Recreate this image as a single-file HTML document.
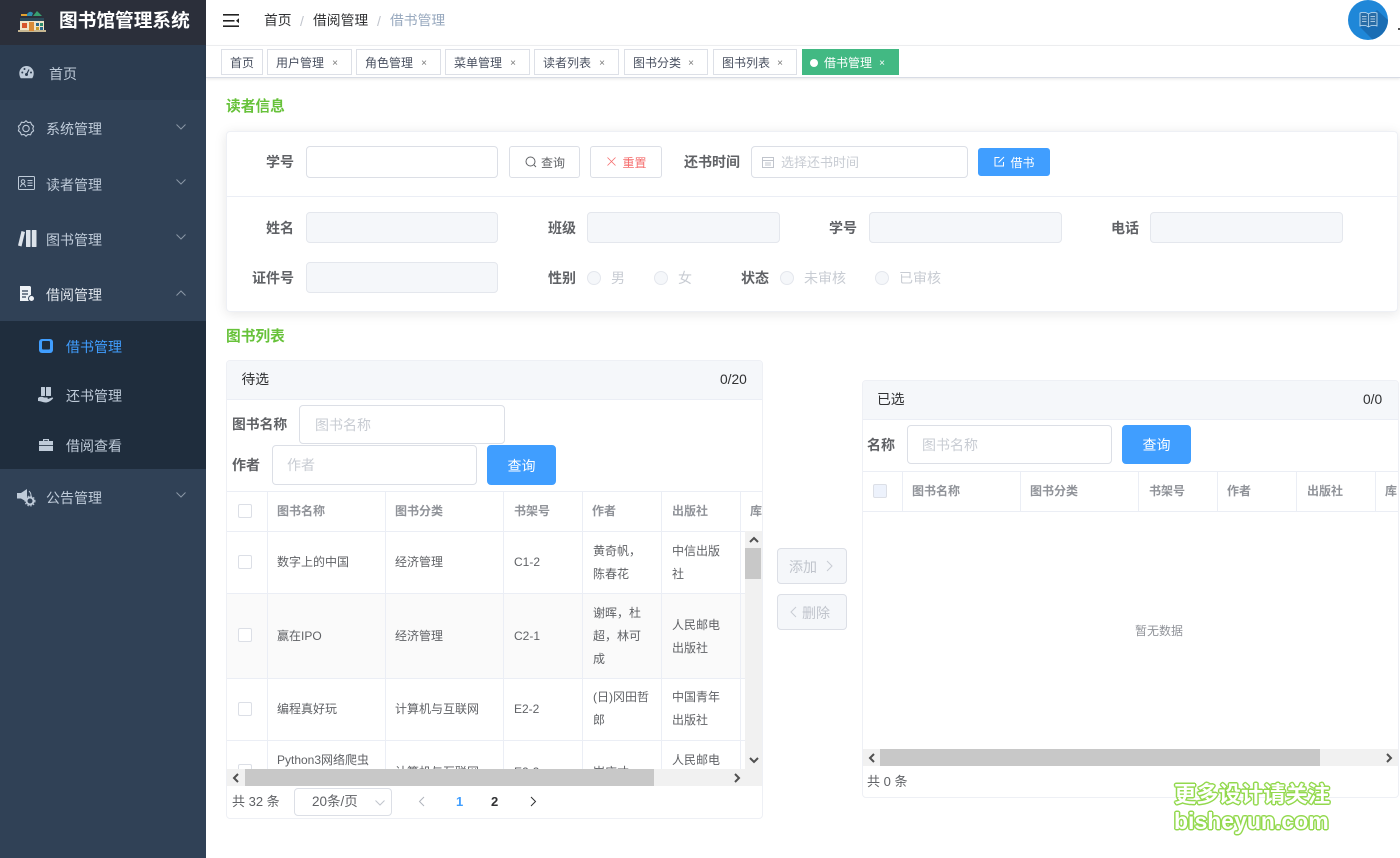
<!DOCTYPE html>
<html lang="zh-CN"><head><meta charset="utf-8"><title>图书馆管理系统</title>
<style>
*{box-sizing:border-box}
html{margin:0;padding:0;width:1400px;height:858px;overflow:hidden;background:#fff}
body{margin:0;padding:0;width:1400px;height:858px;overflow:hidden;background:#fff;position:relative;font-family:"Liberation Sans","Noto Sans CJK SC",sans-serif;font-size:14px;color:#606266;filter:blur(.3px)}
.a{position:absolute}
.t{position:absolute;height:20px;line-height:20px;white-space:nowrap}
.l{font-weight:700;color:#606266}
.m{color:#bfcbd9}
.inp{position:absolute;border:1px solid #dcdfe6;border-radius:4px;background:#fff}
.dis{background:#f5f7fa;border-color:#e4e7ed}
.ph{color:#c8ccd3}
.tag{position:absolute;top:49px;height:26px;border:1px solid #dde0e7;background:#fff;color:#495060;font-size:12px;line-height:26px;padding-left:8px;white-space:nowrap}
.tag i{position:absolute;right:13px;top:1px;font-style:normal;font-size:10px;color:#777}
.radio{position:absolute;width:14px;height:14px;border-radius:50%;background:#f5f7fa;border:1px solid #e4e7ed;top:271px}
.btn{position:absolute;border:1px solid #dcdfe6;border-radius:3px;background:#fff;font-size:12px;text-align:center}
.blue{background:#409eff;border-color:#409eff;color:#fff}
.panel{position:absolute;border:1px solid #eef0f5;border-radius:4px;background:#fff;overflow:hidden}
.head{position:absolute;left:0;right:0;top:0;height:39px;background:#f5f7fa;border-bottom:1px solid #ebeef5}
.th{position:absolute;font-size:12px;font-weight:700;color:#909399;height:20px;line-height:20px;white-space:nowrap}
.td{position:absolute;font-size:12px;color:#606266;line-height:23px;white-space:nowrap}
.v{position:absolute;width:1px;background:#ebeef5}
.h{position:absolute;height:1px;background:#ebeef5}
.cb{position:absolute;width:14px;height:14px;border:1px solid #dcdfe6;border-radius:2px;background:#fff}
.wm{position:absolute;height:26px;line-height:26px;white-space:nowrap;font-weight:700;color:#fff;text-shadow:1.500px 0 0 #93d94e,-1.500px 0 0 #93d94e,0 1.500px 0 #93d94e,0 -1.500px 0 #93d94e,1px 1px 0 #93d94e,-1px 1px 0 #93d94e,1px -1px 0 #93d94e,-1px -1px 0 #93d94e}
svg{position:absolute;overflow:visible}
</style></head><body>

<!-- sidebar -->
<div class="a" style="left:0;top:0;width:206px;height:858px;background:#304156"></div>
<div class="a" style="left:0;top:0;width:206px;height:45px;background:#2b2f3a"></div>
<div class="a" style="left:0;top:45px;width:206px;height:55px;background:#2c3c50"></div>
<div class="a" style="left:0;top:321px;width:206px;height:148px;background:#1f2d3d"></div>

<svg style="left:18px;top:8px" width="28" height="26" viewBox="0 0 28 26">
<rect x="2" y="10" width="24" height="13" fill="#f1e5c8"/>
<rect x="0" y="22" width="28" height="2" fill="#c8b892"/>
<rect x="2" y="10" width="24" height="3" fill="#2c4a5a"/>
<path d="M3 6h6v2H3z" fill="#e0a030"/><path d="M9 6q3-4 6-1l-1 3H9z" fill="#2f8fb0"/><path d="M15 8l4-5 5 5z" fill="#38a070"/>
<rect x="4" y="15" width="5" height="5" fill="#d8552c"/><rect x="11" y="14" width="5" height="9" fill="#d98b36"/><rect x="18" y="15" width="3" height="3" fill="#2c6a8a"/><rect x="22" y="15" width="3" height="3" fill="#2c8a6a"/><rect x="18" y="19" width="3" height="3" fill="#c9a030"/><rect x="22" y="19" width="3" height="3" fill="#2c6a8a"/>
</svg>
<div class="t" style="left:59px;top:10px;height:22px;line-height:22px;font-size:18.700px;font-weight:700;color:#fff">图书馆管理系统</div>

<svg style="left:19px;top:66px" width="15" height="13" viewBox="0 0 15 13"><path d="M7.500 0A7.200 7.200 0 0 0 .3 7.200c0 2 .6 3.700 1.500 5h11.400c.9-1.300 1.500-3 1.500-5A7.200 7.200 0 0 0 7.500 0z" fill="#bfcbd9"/><circle cx="7.500" cy="8.500" r="1.500" fill="#2c3c50"/><path d="M7.500 8.500l2.500-5" stroke="#2c3c50" stroke-width="1.200"/><circle cx="3.300" cy="6.500" r="1" fill="#2c3c50"/><circle cx="5.500" cy="3" r="1" fill="#2c3c50"/><circle cx="12" cy="6.500" r="1" fill="#2c3c50"/></svg>
<div class="t m" style="left:49px;top:64px">首页</div>

<svg style="left:18px;top:120px" width="16" height="17" viewBox="0 0 16 17" fill="none" stroke="#bfcbd9" stroke-width="1.100"><path d="M8 .8l2 1.800 2.600-.4 1 2.400 2 1.600-.8 2.300.8 2.300-2 1.600-1 2.400-2.600-.4-2 1.800-2-1.800-2.600.4-1-2.400-2-1.600.8-2.300L.4 6.200l2-1.600 1-2.400 2.600.4z"/><circle cx="8" cy="8.500" r="3.200"/></svg>
<div class="t m" style="left:46px;top:119px">系统管理</div>

<svg style="left:18px;top:176px" width="17" height="14" viewBox="0 0 17 14" fill="none" stroke="#bfcbd9" stroke-width="1"><rect x=".5" y=".5" width="16" height="13" rx="1"/><circle cx="5" cy="5.500" r="1.800"/><path d="M2.500 11c.3-2.200 1.300-3 2.500-3s2.200.8 2.500 3M9.500 4.500h5M9.500 7h5M9.500 9.500h5"/></svg>
<div class="t m" style="left:46px;top:175px">读者管理</div>

<svg style="left:18px;top:230px" width="19" height="17" viewBox="0 0 19 17" fill="#dde3ea"><path d="M3.500 1l3.500 1-3.500 14.500L0 15.500z"/><rect x="8" y="0" width="4.500" height="17" rx=".5"/><rect x="13.800" y="0" width="4.700" height="17" rx=".5"/></svg>
<div class="t m" style="left:46px;top:230px">图书管理</div>

<svg style="left:19px;top:286px" width="16" height="16" viewBox="0 0 16 16"><path d="M1 0h10l1 1v14H1z" fill="#eef2f6"/><path d="M3 5h6M3 8h6M3 11h4" stroke="#304156" stroke-width="1.200"/><circle cx="12.500" cy="12.500" r="3" fill="#eef2f6" stroke="#304156"/></svg>
<div class="t" style="left:46px;top:285px;color:#dfe5ec">借阅管理</div>

<svg style="left:39px;top:339px" width="14" height="14" viewBox="0 0 14 14"><rect width="14" height="14" rx="3" fill="#409eff"/><rect x="3" y="2" width="8" height="8.500" rx="1" fill="#1f2d3d"/></svg>
<div class="t" style="left:66px;top:337px;color:#409eff">借书管理</div>

<svg style="left:38px;top:387px" width="15" height="16" viewBox="0 0 15 16" fill="#bfcbd9"><rect x="3" y="0" width="4" height="9" rx=".5"/><rect x="8" y="0" width="5" height="9" rx=".5"/><path d="M0 11c2-1.500 4-1.500 6-.5h3c1.200 0 1.200 1.500 0 1.500H6.500h3.500l4-1.500c1-.3 1.500.7.800 1.200C12.500 14 10 15.500 7.500 15.500 5 15.500 3 14 0 14z"/></svg>
<div class="t m" style="left:66px;top:386px">还书管理</div>

<svg style="left:39px;top:438px" width="14" height="13" viewBox="0 0 14 13" fill="#bfcbd9"><path d="M4 3V1h6v2h-1.200V2.200H5.200V3z"/><rect y="3" width="14" height="4.200"/><rect y="8" width="14" height="5"/></svg>
<div class="t m" style="left:66px;top:436px">借阅查看</div>

<svg style="left:17px;top:488px" width="18" height="18" viewBox="0 0 18 18"><path d="M0 5h4l6-4v13l-6-3.500H0z" fill="#bfcbd9"/><path d="M12 3q3 3 1.500 7" stroke="#bfcbd9" fill="none"/><circle cx="13" cy="13" r="3.500" fill="none" stroke="#bfcbd9" stroke-width="2"/><circle cx="13" cy="13" r="5" fill="none" stroke="#bfcbd9" stroke-width="1" stroke-dasharray="1.500 1.500"/></svg>
<div class="t m" style="left:46px;top:488px">公告管理</div>

<svg style="left:176px;top:124px" width="10" height="6" viewBox="0 0 10 6" fill="none" stroke="#8a97a6"><path d="M.5.500L5 5 9.500.500"/></svg>
<svg style="left:176px;top:179px" width="10" height="6" viewBox="0 0 10 6" fill="none" stroke="#8a97a6"><path d="M.5.500L5 5 9.500.500"/></svg>
<svg style="left:176px;top:234px" width="10" height="6" viewBox="0 0 10 6" fill="none" stroke="#8a97a6"><path d="M.5.500L5 5 9.500.500"/></svg>
<svg style="left:176px;top:290px" width="10" height="6" viewBox="0 0 10 6" fill="none" stroke="#8a97a6"><path d="M.5 5.500L5 1l4.500 4.500"/></svg>
<svg style="left:176px;top:492px" width="10" height="6" viewBox="0 0 10 6" fill="none" stroke="#8a97a6"><path d="M.5.500L5 5 9.500.500"/></svg>

<!-- navbar -->
<svg style="left:223px;top:14px" width="16" height="13" viewBox="0 0 16 13" fill="#222"><rect width="16" height="1.600"/><rect y="6" width="11.500" height="1.600"/><rect y="11.400" width="16" height="1.600"/><path d="M16 4.200v5l-3-2.500z"/></svg>
<div class="t" style="left:264px;top:11px;color:#303133;font-size:13.800px">首页</div>
<div class="t" style="left:300px;top:11px;color:#c0c4cc">/</div>
<div class="t" style="left:313px;top:11px;color:#303133;font-size:13.800px">借阅管理</div>
<div class="t" style="left:377px;top:11px;color:#c0c4cc">/</div>
<div class="t" style="left:390px;top:11px;color:#97a8be;font-size:13.800px">借书管理</div>
<div class="a" style="left:1348px;top:0;width:40px;height:40px;border-radius:50%;background:#1f87d8;overflow:hidden">
<svg style="left:0;top:0" width="40" height="40" viewBox="0 0 40 40"><path d="M12 27l13 13h15V20L29 10z" fill="#1a6db4"/></svg>
<svg style="left:11px;top:11px" width="19" height="18" viewBox="0 0 19 18"><path d="M1 2c3-1 6-1 8.500 1 2.500-2 5.500-2 8.500-1v13c-3-1-6-1-8.500 1-2.500-2-5.500-2-8.500-1z" fill="#2a6da6" stroke="#cfe6f7" stroke-width=".8"/><path d="M9.500 3v13M3 5.500h4.500M3 8h4.500M3 10.500h4.500M11.500 5.500H16M11.500 8H16M11.500 10.500H16" stroke="#cfe6f7" stroke-width=".7"/></svg></div>
<div class="a" style="left:1398px;top:28px;width:2px;height:2px;background:#555"></div>
<div class="a" style="left:206px;top:45px;width:1194px;height:1px;background:#f0f1f3"></div>

<!-- tags -->
<div class="a" style="left:206px;top:46px;width:1194px;height:32px;background:#fff;border-bottom:1px solid #d8dce5;box-shadow:0 1px 3px rgba(0,0,0,.1)"></div>
<div class="tag" style="left:221px;width:42px">首页</div>
<div class="tag" style="left:267px;width:85px">用户管理<i>×</i></div>
<div class="tag" style="left:356px;width:85px">角色管理<i>×</i></div>
<div class="tag" style="left:445px;width:85px">菜单管理<i>×</i></div>
<div class="tag" style="left:534px;width:85px">读者列表<i>×</i></div>
<div class="tag" style="left:624px;width:84px">图书分类<i>×</i></div>
<div class="tag" style="left:713px;width:84px">图书列表<i>×</i></div>
<div class="tag" style="left:802px;width:97px;background:#42b983;border-color:#42b983;color:#fff;padding-left:21px">借书管理<i style="color:#fff">×</i><span class="a" style="left:7px;top:9px;width:8px;height:8px;border-radius:50%;background:#fff"></span></div>

<!-- reader -->
<div class="t" style="left:226px;top:97px;font-size:14.700px;font-weight:700;color:#67c23a">读者信息</div>
<div class="a" style="left:226px;top:131px;width:1172px;height:181px;background:#fff;border:1px solid #eef0f5;border-radius:4px;box-shadow:0 2px 12px rgba(0,0,0,.1)"></div>
<div class="a" style="left:227px;top:196px;width:1170px;height:1px;background:#ebeef5"></div>

<div class="t l" style="left:266px;top:152px">学号</div>
<div class="inp" style="left:306px;top:146px;width:192px;height:32px"></div>
<div class="btn" style="left:509px;top:146px;width:71px;height:32px;line-height:32px;padding-left:17px">查询</div>
<svg style="left:525px;top:156px" width="12" height="12" viewBox="0 0 12 12" fill="none" stroke="#606266"><circle cx="5.500" cy="5.500" r="4.500"/><path d="M9 9l2 2"/></svg>
<div class="btn" style="left:590px;top:146px;width:72px;height:32px;line-height:32px;padding-left:17px;color:#f56c6c">重置</div>
<svg style="left:607px;top:157px" width="9" height="9" viewBox="0 0 9 9" stroke="#f56c6c" stroke-width=".8"><path d="M.5.500l8 8M8.500.500l-8 8"/></svg>
<div class="t l" style="left:684px;top:152px">还书时间</div>
<div class="inp" style="left:751px;top:146px;width:217px;height:32px"></div>
<svg style="left:762px;top:156px" width="12" height="12" viewBox="0 0 12 12" fill="none" stroke="#c0c4cc"><rect x=".5" y="1.500" width="11" height="10"/><path d="M.5 4.500h11M3 7h6M3 9h6"/></svg>
<div class="t ph" style="left:781px;top:153px;font-size:13px">选择还书时间</div>
<div class="btn blue" style="left:978px;top:148px;width:72px;height:28px;line-height:28px;padding-left:17px">借书</div>
<svg style="left:994px;top:156px" width="11" height="11" viewBox="0 0 11 11" fill="none" stroke="#fff"><path d="M9.500 6v4H1V1.500h4.500M4.500 6.500L10 1"/></svg>

<div class="t l" style="left:266px;top:218px">姓名</div>
<div class="inp dis" style="left:306px;top:212px;width:192px;height:31px"></div>
<div class="t l" style="left:548px;top:218px">班级</div>
<div class="inp dis" style="left:587px;top:212px;width:193px;height:31px"></div>
<div class="t l" style="left:829px;top:218px">学号</div>
<div class="inp dis" style="left:869px;top:212px;width:193px;height:31px"></div>
<div class="t l" style="left:1111px;top:218px">电话</div>
<div class="inp dis" style="left:1150px;top:212px;width:193px;height:31px"></div>

<div class="t l" style="left:252px;top:268px">证件号</div>
<div class="inp dis" style="left:306px;top:262px;width:192px;height:31px"></div>
<div class="t l" style="left:548px;top:268px">性别</div>
<div class="radio" style="left:587px"></div><div class="t ph" style="left:611px;top:268px">男</div>
<div class="radio" style="left:654px"></div><div class="t ph" style="left:678px;top:268px">女</div>
<div class="t l" style="left:741px;top:268px">状态</div>
<div class="radio" style="left:780px"></div><div class="t ph" style="left:804px;top:268px">未审核</div>
<div class="radio" style="left:875px"></div><div class="t ph" style="left:899px;top:268px">已审核</div>

<div class="t" style="left:226px;top:327px;font-size:14.700px;font-weight:700;color:#67c23a">图书列表</div>

<!-- left panel -->
<div class="panel" style="left:226px;top:360px;width:537px;height:459px"><div class="head"></div></div>
<div class="t" style="left:241.500px;top:370px;color:#303133;font-size:13.800px">待选</div>
<div class="t" style="left:720px;top:370px;color:#303133;font-size:13.800px">0/20</div>
<div class="t l" style="left:232px;top:415px;font-size:13.800px">图书名称</div>
<div class="inp" style="left:299px;top:405px;width:206px;height:39px"></div>
<div class="t ph" style="left:315px;top:415px">图书名称</div>
<div class="t l" style="left:232px;top:455px">作者</div>
<div class="inp" style="left:272px;top:445px;width:205px;height:40px"></div>
<div class="t ph" style="left:287px;top:455px">作者</div>
<div class="btn blue" style="left:487px;top:445px;width:69px;height:40px;line-height:40px;font-size:14px;border-radius:4px">查询</div>

<!-- left table -->
<div class="a" style="left:227px;top:491px;width:535px;height:279px;overflow:hidden">
<div class="h" style="left:0;top:0;width:535px"></div>
<div class="h" style="left:0;top:40px;width:535px"></div>
<div class="a" style="left:0;top:102px;width:518px;height:85px;background:#fafafa"></div>
<div class="h" style="left:0;top:102px;width:518px"></div>
<div class="h" style="left:0;top:187px;width:518px"></div>
<div class="h" style="left:0;top:249px;width:518px"></div>
<div class="v" style="left:40px;top:0;height:279px"></div>
<div class="v" style="left:158px;top:0;height:279px"></div>
<div class="v" style="left:276px;top:0;height:279px"></div>
<div class="v" style="left:355px;top:0;height:279px"></div>
<div class="v" style="left:434px;top:0;height:279px"></div>
<div class="v" style="left:513px;top:0;height:279px"></div>
<div class="cb" style="left:11px;top:13px"></div>
<div class="th" style="left:50px;top:10px">图书名称</div>
<div class="th" style="left:168px;top:10px">图书分类</div>
<div class="th" style="left:287px;top:10px">书架号</div>
<div class="th" style="left:365px;top:10px">作者</div>
<div class="th" style="left:445px;top:10px">出版社</div>
<div class="th" style="left:523px;top:10px">库</div>

<div class="cb" style="left:11px;top:64px"></div>
<div class="td" style="left:50px;top:60px">数字上的中国</div>
<div class="td" style="left:168px;top:60px">经济管理</div>
<div class="td" style="left:287px;top:60px">C1-2</div>
<div class="td" style="left:366px;top:49px">黄奇帆，<br>陈春花</div>
<div class="td" style="left:445px;top:49px">中信出版<br>社</div>

<div class="cb" style="left:11px;top:137px"></div>
<div class="td" style="left:50px;top:134px">赢在IPO</div>
<div class="td" style="left:168px;top:134px">经济管理</div>
<div class="td" style="left:287px;top:134px">C2-1</div>
<div class="td" style="left:366px;top:111px">谢晖，杜<br>超，林可<br>成</div>
<div class="td" style="left:445px;top:123px">人民邮电<br>出版社</div>

<div class="cb" style="left:11px;top:211px"></div>
<div class="td" style="left:50px;top:207px">编程真好玩</div>
<div class="td" style="left:168px;top:207px">计算机与互联网</div>
<div class="td" style="left:287px;top:207px">E2-2</div>
<div class="td" style="left:366px;top:195px">(日)冈田哲<br>郎</div>
<div class="td" style="left:445px;top:195px">中国青年<br>出版社</div>

<div class="cb" style="left:11px;top:273px"></div>
<div class="td" style="left:50px;top:258px">Python3网络爬虫</div>
<div class="td" style="left:168px;top:270px">计算机与互联网</div>
<div class="td" style="left:287px;top:270px">E2-2</div>
<div class="td" style="left:366px;top:270px">崔庆才</div>
<div class="td" style="left:445px;top:258px">人民邮电</div>
<div class="a" style="left:518px;top:40px;width:17px;height:239px;background:#f1f1f1"></div>
<div class="a" style="left:518px;top:57px;width:16px;height:31px;background:#c8c8c8"></div>
<svg style="left:522px;top:45px" width="10" height="7" viewBox="0 0 10 7" fill="none" stroke="#505050" stroke-width="2"><path d="M1 6l4-4 4 4"/></svg>
<svg style="left:522px;top:266px" width="10" height="7" viewBox="0 0 10 7" fill="none" stroke="#505050" stroke-width="2"><path d="M1 1l4 4 4-4"/></svg>
</div>
<div class="a" style="left:227px;top:769px;width:535px;height:17px;background:#f1f1f1"></div>
<div class="a" style="left:245px;top:769px;width:409px;height:17px;background:#c8c8c8"></div>
<svg style="left:232px;top:773px" width="7" height="10" viewBox="0 0 7 10" fill="none" stroke="#505050" stroke-width="2"><path d="M6 1L2 5l4 4"/></svg>
<svg style="left:734px;top:773px" width="7" height="10" viewBox="0 0 7 10" fill="none" stroke="#505050" stroke-width="2"><path d="M1 1l4 4-4 4"/></svg>

<div class="t" style="left:232px;top:792px;font-size:13px">共 32 条</div>
<div class="inp" style="left:294px;top:788px;width:98px;height:28px"></div>
<div class="t" style="left:312px;top:792px;font-size:13.500px">20条/页</div>
<svg style="left:375px;top:800px" width="10" height="6" viewBox="0 0 10 6" fill="none" stroke="#c0c4cc"><path d="M.5.500L5 5 9.500.500"/></svg>
<svg style="left:418px;top:796px" width="7" height="11" viewBox="0 0 7 11" fill="none" stroke="#b0b4bc"><path d="M6 1L1.500 5.500 6 10"/></svg>
<div class="t" style="left:456px;top:792px;font-size:13px;font-weight:700;color:#409eff">1</div>
<div class="t" style="left:491px;top:792px;font-size:13px;font-weight:700;color:#303133">2</div>
<svg style="left:530px;top:796px" width="7" height="11" viewBox="0 0 7 11" fill="none" stroke="#303133"><path d="M1 1l4.500 4.500L1 10"/></svg>

<!-- transfer buttons -->
<div class="btn dis" style="left:777px;top:548px;width:70px;height:36px;line-height:36px;font-size:14px;color:#c0c4cc;border-radius:4px;padding-right:18px;background:#f5f7fa">添加</div>
<svg style="left:826px;top:560px" width="7" height="12" viewBox="0 0 7 12" fill="none" stroke="#c8ccd3"><path d="M1 1l5 5-5 5"/></svg>
<div class="btn dis" style="left:777px;top:594px;width:70px;height:36px;line-height:36px;font-size:14px;color:#c0c4cc;border-radius:4px;padding-left:8px;background:#f5f7fa">删除</div>
<svg style="left:790px;top:606px" width="7" height="12" viewBox="0 0 7 12" fill="none" stroke="#c8ccd3"><path d="M6 1L1 6l5 5"/></svg>

<!-- right panel -->
<div class="panel" style="left:862px;top:380px;width:537px;height:418px"><div class="head"></div></div>
<div class="t" style="left:877px;top:390px;color:#303133;font-size:13.800px">已选</div>
<div class="t" style="left:1363px;top:390px;color:#303133;font-size:13.800px">0/0</div>
<div class="t l" style="left:867px;top:435px">名称</div>
<div class="inp" style="left:907px;top:425px;width:205px;height:39px"></div>
<div class="t ph" style="left:922px;top:435px">图书名称</div>
<div class="btn blue" style="left:1122px;top:425px;width:69px;height:39px;line-height:39px;font-size:14px;border-radius:4px">查询</div>

<div class="a" style="left:863px;top:471px;width:535px;height:41px;overflow:hidden">
<div class="h" style="left:0;top:0;width:535px"></div>
<div class="h" style="left:0;top:40px;width:535px"></div>
<div class="v" style="left:39px;top:0;height:40px"></div>
<div class="v" style="left:157px;top:0;height:40px"></div>
<div class="v" style="left:275px;top:0;height:40px"></div>
<div class="v" style="left:354px;top:0;height:40px"></div>
<div class="v" style="left:433px;top:0;height:40px"></div>
<div class="v" style="left:512px;top:0;height:40px"></div>
<div class="cb" style="left:10px;top:13px;background:#edf2fc"></div>
<div class="th" style="left:49px;top:10px">图书名称</div>
<div class="th" style="left:167px;top:10px">图书分类</div>
<div class="th" style="left:286px;top:10px">书架号</div>
<div class="th" style="left:364px;top:10px">作者</div>
<div class="th" style="left:444px;top:10px">出版社</div>
<div class="th" style="left:522px;top:10px">库</div>
</div>
<div class="t" style="left:1135px;top:621px;font-size:12px;color:#909399">暂无数据</div>
<div class="a" style="left:863px;top:749px;width:535px;height:17px;background:#f1f1f1"></div>
<div class="a" style="left:880px;top:749px;width:440px;height:17px;background:#c8c8c8"></div>
<svg style="left:868px;top:753px" width="7" height="10" viewBox="0 0 7 10" fill="none" stroke="#505050" stroke-width="2"><path d="M6 1L2 5l4 4"/></svg>
<svg style="left:1386px;top:753px" width="7" height="10" viewBox="0 0 7 10" fill="none" stroke="#505050" stroke-width="2"><path d="M1 1l4 4-4 4"/></svg>
<div class="t" style="left:867px;top:772px;font-size:13px">共 0 条</div>

<!-- watermark -->
<div class="wm" style="left:1174px;top:782px;font-size:22.300px">更多设计请关注</div>
<div class="wm" style="left:1174px;top:808px;font-size:23px">bisheyun.com</div>
</body></html>
